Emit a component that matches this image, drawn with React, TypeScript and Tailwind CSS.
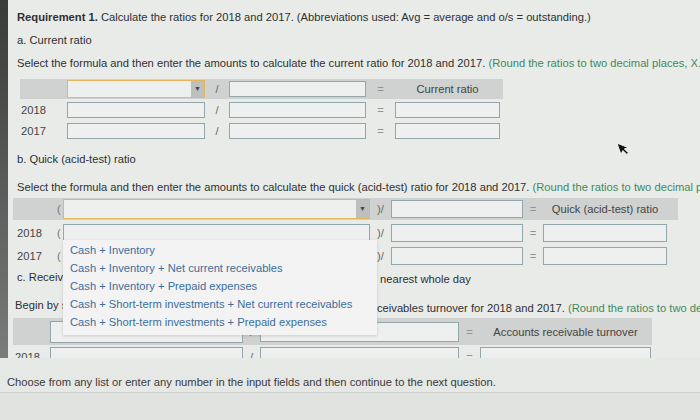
import React from 'react'

const Box = ({ w, h }: { w: string; h: string }) => (
  <div className={`${w} ${h} shrink-0 border border-[#93a6ab] bg-[#edf0ee]`} />
)

const Drop = ({ w, h }: { w: string; h: string }) => (
  <div className={`${w} ${h} shrink-0 flex border border-[#e5b65e] bg-[#eef0ee]`}>
    <div className="flex-1" />
    <div className="w-[13px] bg-[#bcc0bf] flex items-center justify-center text-[7px] text-[#444]">▼</div>
  </div>
)

const options = [
  'Cash + Inventory',
  'Cash + Inventory + Net current receivables',
  'Cash + Inventory + Prepaid expenses',
  'Cash + Short-term investments + Net current receivables',
  'Cash + Short-term investments + Prepaid expenses',
]

export default function App() {
  return (
    <div className="w-[700px] h-[420px] overflow-hidden bg-[#e5e7e4] font-['Liberation_Sans',Arial,sans-serif] text-[11.2px] leading-[14px] text-[#2e3032]">
      <div className="flex h-[358px]">
        <div className="w-[8px] bg-gradient-to-b from-[#3a3a3a] to-[#7a7b7a]" />
        <div className="relative flex-1 overflow-hidden bg-[#e9ebe8] pt-[10px] whitespace-nowrap">
          {/* a. Current ratio */}
          <div className="pl-[9px]">
            <span className="font-bold">Requirement 1.</span> Calculate the ratios for 2018 and 2017. (Abbreviations used: Avg = average and o/s = outstanding.)
          </div>
          <div className="pl-[9px] mt-[9px]">a. Current ratio</div>
          <div className="pl-[9px] mt-[9px]">
            Select the formula and then enter the amounts to calculate the current ratio for 2018 and 2017.{' '}
            <span className="text-[#3f8a5c]">(Round the ratios to two decimal places, X.XX.)</span>
          </div>

          <div className="ml-[12px] mt-[9px] w-[483px]">
            <div className="h-[20px] bg-[#cfd2d0] flex items-center">
              <div className="w-[47px] shrink-0" />
              <Drop w="w-[138px]" h="h-[18px]" />
              <div className="w-[24px] shrink-0 text-center text-[#666]">/</div>
              <Box w="w-[137px]" h="h-[16px]" />
              <div className="w-[29px] shrink-0 text-center text-[#8a9694]">=</div>
              <div className="w-[105px] shrink-0 text-center text-[#444]">Current ratio</div>
            </div>
            {['2018', '2017'].map((y) => (
              <div key={y} className="h-[21px] flex items-center">
                <div className="w-[47px] shrink-0 pl-[1px] text-[#444]">{y}</div>
                <Box w="w-[138px]" h="h-[16px]" />
                <div className="w-[24px] shrink-0 text-center text-[#666]">/</div>
                <Box w="w-[137px]" h="h-[16px]" />
                <div className="w-[29px] shrink-0 text-center text-[#8a9694]">=</div>
                <Box w="w-[105px]" h="h-[16px]" />
              </div>
            ))}
          </div>

          {/* b. Quick ratio */}
          <div className="pl-[9px] mt-[11px]">b. Quick (acid-test) ratio</div>
          <div className="pl-[9px] mt-[14px]">
            Select the formula and then enter the amounts to calculate the quick (acid-test) ratio for 2018 and 2017.{' '}
            <span className="text-[#3f8a5c]">(Round the ratios to two decimal places, X.XX.)</span>
          </div>

          <div className="ml-[5px] mt-[4px] w-[665px]">
            <div className="h-[22px] bg-[#cfd2d0] flex items-center">
              <div className="w-[44px] shrink-0" />
              <div className="w-[6px] shrink-0 text-[#777]">(</div>
              <Drop w="w-[307px]" h="h-[20px]" />
              <div className="w-[21px] shrink-0 text-center text-[#666]">)/</div>
              <Box w="w-[132px]" h="h-[18px]" />
              <div className="w-[20px] shrink-0 text-center text-[#8a9694]">=</div>
              <div className="w-[124px] shrink-0 text-center text-[#444]">Quick (acid-test) ratio</div>
            </div>
            <div className="mt-[1px]">
              {['2018', '2017'].map((y) => (
                <div key={y} className="h-[23px] flex items-center">
                  <div className="w-[44px] shrink-0 pl-[4px] text-[#444]">{y}</div>
                  <div className="w-[6px] shrink-0 text-[#777]">(</div>
                  <Box w="w-[307px]" h="h-[18px]" />
                  <div className="w-[21px] shrink-0 text-center text-[#666]">)/</div>
                  <Box w="w-[132px]" h="h-[18px]" />
                  <div className="w-[20px] shrink-0 text-center text-[#8a9694]">=</div>
                  <Box w="w-[124px]" h="h-[18px]" />
                </div>
              ))}
            </div>
          </div>

          {/* c. Receivables turnover (middle part sits under the open list) */}
          <div className="pl-[9px] mt-[3px] flex">
            <div className="w-[363px] shrink-0">
              <div className="w-[350px] overflow-hidden">c. Receivables turnover ratio and days' sales in receivables (Round to the</div>
            </div>
            <span className="mt-[2px]">nearest whole day</span>
          </div>
          <div className="pl-[7px] mt-[12px] flex">
            <div className="w-[362px] shrink-0">
              <div className="w-[350px] overflow-hidden">Begin by selecting the formula to calculate the accounts receivables</div>
            </div>
            <span className="mt-[3px]">
              ceivables turnover for 2018 and 2017.{' '}
              <span className="text-[#3f8a5c]">(Round the ratios to two decimal places, X.XX.)</span>
            </span>
          </div>

          <div className="ml-[5px] mt-[3px] w-[639px]">
            <div className="h-[27px] bg-[#cfd2d0] flex items-center">
              <div className="w-[37px] shrink-0" />
              <Box w="w-[193px]" h="h-[22px]" />
              <div className="w-[17px] shrink-0 text-center text-[#666]">/</div>
              <Box w="w-[199px]" h="h-[20px]" />
              <div className="w-[21px] shrink-0 text-center text-[#8a9694]">=</div>
              <div className="w-[171px] shrink-0 text-center text-[#444]">Accounts receivable turnover</div>
            </div>
            <div className="h-[24px] flex items-center">
              <div className="w-[37px] shrink-0 pl-[2px] text-[#444]">2018</div>
              <Box w="w-[193px]" h="h-[20px]" />
              <div className="w-[17px] shrink-0 text-center text-[#666]">/</div>
              <Box w="w-[199px]" h="h-[20px]" />
              <div className="w-[21px] shrink-0 text-center text-[#8a9694]">=</div>
              <Box w="w-[171px]" h="h-[20px]" />
            </div>
          </div>

          {/* open dropdown list */}
          <div className="absolute left-[55px] top-[240px] w-[314px] h-[95px] bg-[#f2f3f2] shadow-[0_1px_3px_rgba(0,0,0,0.15)] pt-[1px] pl-[7px] text-[#3d6e9b]">
            {options.map((o) => (
              <div key={o} className="h-[18px] leading-[18px]">{o}</div>
            ))}
          </div>

          {/* mouse cursor */}
          <svg className="absolute left-[610px] top-[140px]" width="12" height="16" viewBox="0 0 12 16">
            <path d="M1 1 L1 13 L4 10 L6.5 15 L8.5 14 L6 9 L10 9 Z" fill="#111" stroke="#fff" strokeWidth="0.8" transform="rotate(-20 6 8)" />
          </svg>
        </div>
      </div>
      <div className="h-[34px] bg-[#e6e8e5] pl-[7px] pt-[17px] text-[#3a3a3a]">
        Choose from any list or enter any number in the input fields and then continue to the next question.
      </div>
      <div className="h-[28px] border-t border-[#cfd1ce] bg-[#e1e3e0]" />
    </div>
  )
}
